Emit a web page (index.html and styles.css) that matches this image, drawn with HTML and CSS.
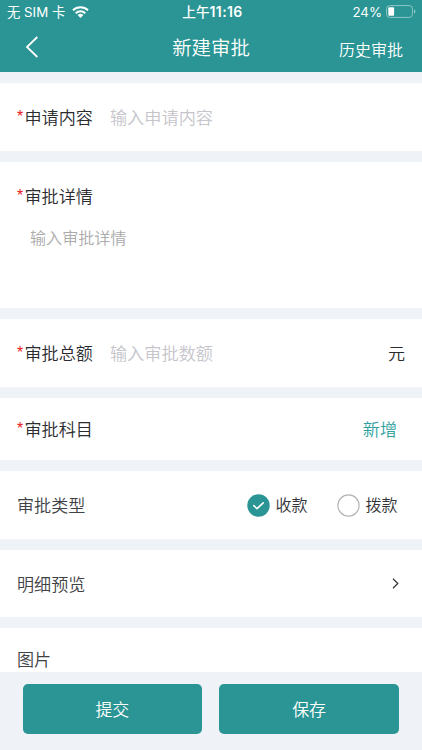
FILE: index.html
```html
<!DOCTYPE html>
<html lang="zh-CN">
<head>
<meta charset="utf-8">
<title>新建审批</title>
<link rel="stylesheet" href="styles.css">
</head>
<body>
<div class="app">
  <header class="header">
    <div class="status">
      <div class="carrier"><span>无 SIM 卡</span>
        <svg class="wifi" width="17" height="12" viewBox="0 0 17 12"><g fill="none" stroke="#fff" stroke-width="2"><path d="M1 4.3a11 11 0 0 1 15 0"/><path d="M3.7 7.2a7 7 0 0 1 9.6 0"/></g><path d="M5.6 9a4.3 4.3 0 0 1 5.8 0L8.5 11.9z" fill="#fff"/></svg>
      </div>
      <div class="time">上午<span class="clock">11:16</span></div>
      <div class="power"><span>24%</span>
        <svg width="30" height="13" viewBox="0 0 30 13"><rect x=".6" y=".6" width="25.8" height="11.8" rx="3" fill="none" stroke="#8fc7c7"/><rect x="2.3" y="2.3" width="5.8" height="8.4" rx="1" fill="#fff"/><path d="M28 4.3q1.5.7 1.5 2.2T28 8.7z" fill="#8fc7c7"/></svg>
      </div>
    </div>
    <nav class="nav">
      <svg class="back" width="14" height="22" viewBox="0 0 14 22"><path d="M12.3 1L2 11l10.3 10" fill="none" stroke="#fff" stroke-width="1.8"/></svg>
      <h1 class="title">新建审批</h1>
      <span class="history">历史审批</span>
    </nav>
  </header>
  <main class="form">
    <section class="card"><span class="star">*</span><span class="label">申请内容</span><span class="hint">输入申请内容</span></section>
    <section class="card detail">
      <div class="line"><span class="star">*</span><span class="label">审批详情</span></div>
      <div class="area-hint">输入审批详情</div>
    </section>
    <section class="card"><span class="star">*</span><span class="label">审批总额</span><span class="hint">输入审批数额</span><span class="unit">元</span></section>
    <section class="card subject"><span class="star">*</span><span class="label">审批科目</span><span class="add">新增</span></section>
    <section class="card">
      <span class="label soft">审批类型</span>
      <div class="radios">
        <div class="radio"><svg width="23" height="23" viewBox="0 0 23 23"><circle cx="11.5" cy="11.5" r="11.2" fill="#2a9594"/><path d="M6.8 11.6l3.2 3.1 6.2-5.9" fill="none" stroke="#fff" stroke-width="1.6" stroke-linecap="round" stroke-linejoin="round"/></svg><span>收款</span></div>
        <div class="radio"><svg width="23" height="23" viewBox="0 0 23 23"><circle cx="11.5" cy="11.5" r="10.6" fill="#fff" stroke="#b4b4b4" stroke-width="1.2"/></svg><span>拨款</span></div>
      </div>
    </section>
    <section class="card preview"><span class="label soft">明细预览</span>
      <svg class="arrow" width="7" height="11" viewBox="0 0 7 11"><path d="M1 .8l4.8 4.7L1 10.2" fill="none" stroke="#333" stroke-width="1.2"/></svg>
    </section>
    <section class="card pictures"><span class="label soft">图片</span></section>
  </main>
  <footer class="footer"><button class="btn">提交</button><button class="btn">保存</button></footer>
</div>
</body>
</html>
```
FILE: styles.css
```css
* { box-sizing: border-box; }
body {
  margin: 0;
  font-family: "Noto Sans CJK SC", sans-serif;
  font-weight: 350;
  color: #2b2c30;
}
.app {
  width: 422px;
  height: 750px;
  display: flex;
  flex-direction: column;
  overflow: hidden;
  background: #eff3f7;
}
.header { height: 72px; flex: none; background: #2a9594; color: #fff; }
.status {
  height: 24px;
  display: grid;
  grid-template-columns: 1fr auto 1fr;
  align-items: center;
  padding: 0 6px 0 7px;
  font: 13.3px/24px Inter, "Noto Sans CJK SC", sans-serif;
}
.carrier, .power { display: flex; align-items: center; height: 23px; margin-bottom: 1px; }
.wifi { margin-left: 7px; }
.time { margin-left: 2px; font-size: 13.6px; font-weight: 500; }
.clock { font-size: 14px; font-weight: 600; letter-spacing: 0.4px; }
.power { justify-content: flex-end; gap: 4px; }
.nav {
  height: 48px;
  display: grid;
  grid-template-columns: 1fr auto 1fr;
  align-items: center;
  padding: 0 19px 0 25px;
}
.back { margin-top: -2px; }
.title { margin: -2px 6px 0 0; font-size: 19.4px; line-height: 28px; font-weight: 350; }
.history { justify-self: end; margin-top: 1px; font-size: 16px; line-height: 24px; }
.form {
  flex: 1;
  min-height: 0;
  overflow: hidden;
  display: flex;
  flex-direction: column;
  gap: 11px;
  padding-top: 11px;
}
.card {
  flex: none;
  height: 68px;
  display: flex;
  align-items: center;
  padding: 0 17px;
  background: #fff;
  font-size: 17.1px;
  line-height: 26px;
}
.star { width: 7.5px; color: #e5201c; font: 16px/26px "Liberation Sans", sans-serif; }
.soft { color: #414245; }
.hint { margin-left: 17px; font-size: 17.2px; color: #c5c5cb; }
.detail { height: 146px; display: block; padding-top: 21px; }
.line { display: flex; }
.area-hint { margin: 16px 0 0 13px; font-size: 16.1px; line-height: 24px; color: #ababab; }
.unit { margin-left: auto; }
.subject { height: 62px; }
.add { margin: 0 8px 0 auto; color: #2fa09f; }
.radios { display: flex; gap: 29.5px; margin: 0 7.5px 0 auto; }
.radio { display: flex; align-items: center; gap: 5.5px; font-size: 16px; color: #333437; }
.radio span { margin-bottom: 2px; }
.preview { height: 67px; }
.arrow { margin: 0 6px 0 auto; }
.pictures { height: 62px; }
.footer {
  height: 78px;
  flex: none;
  display: flex;
  gap: 17px;
  padding: 11.5px 23px 0 22.5px;
}
.btn {
  flex: 1;
  height: 50.5px;
  padding: 0;
  border: 0;
  border-radius: 5px;
  background: #2a9594;
  color: #fff;
  font: 350 17px/26px "Noto Sans CJK SC", sans-serif;
}
```
